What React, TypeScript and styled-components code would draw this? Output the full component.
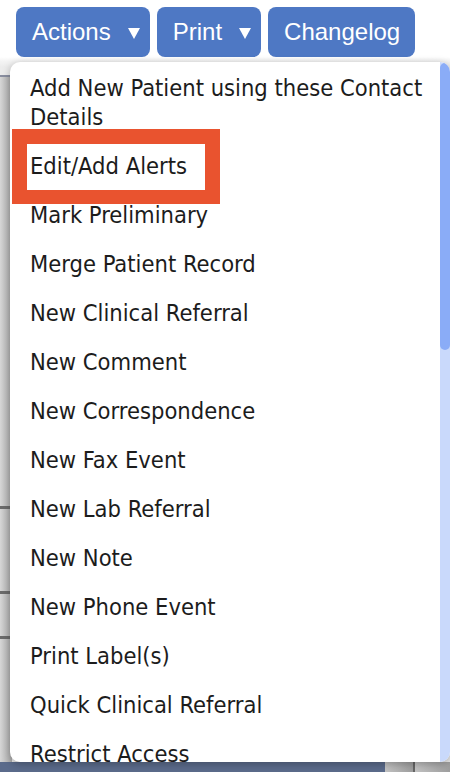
import React from "react";
import styled, { createGlobalStyle } from "styled-components";

const GlobalStyle = createGlobalStyle`
  html, body {
    margin: 0;
    padding: 0;
    background: #ffffff;
  }
  #root {
    width: 450px;
    height: 772px;
    overflow: hidden;
  }
`;

const Page = styled.div`
  position: relative;
  width: 450px;
  height: 772px;
  display: flex;
  flex-direction: column;
  background: #ffffff;
  overflow: hidden;
`;

const Toolbar = styled.div`
  display: flex;
  gap: 7px;
  padding: 7px 16px 0 16px;
  height: 50px;
  flex-shrink: 0;
`;

const ToolButton = styled.button<{ $caret?: boolean }>`
  display: flex;
  align-items: center;
  gap: 17px;
  height: 50px;
  padding: 0 ${(p) => (p.$caret ? "10px" : "15px")} 0 16px;
  border: none;
  border-radius: 8px;
  background: #4e78c4;
  color: #ffffff;
  font-family: "Liberation Sans", Arial, sans-serif;
  font-size: 24px;
  cursor: pointer;
`;

const Caret = styled.span`
  width: 0;
  height: 0;
  margin-top: 3px;
  border-left: 6.5px solid transparent;
  border-right: 6.5px solid transparent;
  border-top: 11px solid #ffffff;
`;

const Workspace = styled.div`
  flex: 1;
  display: flex;
  flex-direction: column;
  background: linear-gradient(#ffffff 0px, #f4f4f4 4px, #ececec 10px);
`;

const Panel = styled.div`
  flex: 1;
  display: flex;
  flex-direction: column;
  margin-top: 18px;
  border-top: 2px solid #8a8fa0;
  background: #e9e9e9;
`;

const StripRow = styled.div<{ $h: number }>`
  height: ${(p) => p.$h}px;
  flex-shrink: 0;
  width: 12px;
  background: linear-gradient(90deg, #d6d6d6, #a9a9a9);
  border-bottom: 3px solid #6b6b6b;
  &:last-child {
    flex: 1;
    border-bottom: none;
  }
`;

const BottomBar = styled.div`
  height: 10px;
  flex-shrink: 0;
  display: flex;
`;

const BarBlue = styled.div`
  width: 385px;
  background: #5b6b8b;
`;

const BarGray = styled.div<{ $w?: number }>`
  ${(p) => (p.$w ? `width: ${p.$w}px;` : "flex: 1;")}
  background: linear-gradient(90deg, #c4c4c4, #9e9e9e);
  border-right: ${(p) => (p.$w ? "2px solid #666" : "none")};
`;

const Menu = styled.div`
  position: absolute;
  top: 62px;
  left: 10px;
  right: 0;
  bottom: 10px;
  display: flex;
  background: #ffffff;
  border-radius: 10px;
  box-shadow: 0 2px 8px rgba(0, 0, 0, 0.28);
  overflow: hidden;
`;

const MenuList = styled.ul`
  flex: 1;
  margin: 0;
  padding: 2px 0 0 0;
  list-style: none;
  overflow: hidden;
`;

const MenuItem = styled.li`
  padding: 10px 8px 10px 20px;
  font-family: "DejaVu Sans Condensed", "DejaVu Sans", Verdana, sans-serif;
  font-size: 23.5px;
  line-height: 29px;
  color: #1c1c1c;
`;

const ScrollTrack = styled.div`
  width: 10px;
  flex-shrink: 0;
  background: #c9d9fb;
  padding-top: 1px;
`;

const ScrollThumb = styled.div`
  height: 287px;
  background: #8aacf7;
  border-radius: 5px;
`;

const Highlight = styled.div`
  position: absolute;
  left: 12px;
  top: 129px;
  width: 208px;
  height: 75px;
  box-sizing: border-box;
  border-style: solid;
  border-color: #e9532f;
  border-width: 15px 15px 14px 15px;
  pointer-events: none;
`;

const items = [
  "Add New Patient using these Contact Details",
  "Edit/Add Alerts",
  "Mark Preliminary",
  "Merge Patient Record",
  "New Clinical Referral",
  "New Comment",
  "New Correspondence",
  "New Fax Event",
  "New Lab Referral",
  "New Note",
  "New Phone Event",
  "Print Label(s)",
  "Quick Clinical Referral",
  "Restrict Access",
];

export default function App() {
  return (
    <>
      <GlobalStyle />
      <Page>
        <Toolbar>
          <ToolButton $caret>
            Actions <Caret />
          </ToolButton>
          <ToolButton $caret>
            Print <Caret />
          </ToolButton>
          <ToolButton>Changelog</ToolButton>
        </Toolbar>
        <Workspace>
          <Panel>
            <StripRow $h={429} />
            <StripRow $h={82} />
            <StripRow $h={42} />
            <StripRow $h={0} />
          </Panel>
          <BottomBar>
            <BarBlue />
            <BarGray $w={28} />
            <BarGray />
          </BottomBar>
        </Workspace>
        <Menu>
          <MenuList>
            {items.map((label) => (
              <MenuItem key={label}>{label}</MenuItem>
            ))}
          </MenuList>
          <ScrollTrack>
            <ScrollThumb />
          </ScrollTrack>
        </Menu>
        <Highlight />
      </Page>
    </>
  );
}
